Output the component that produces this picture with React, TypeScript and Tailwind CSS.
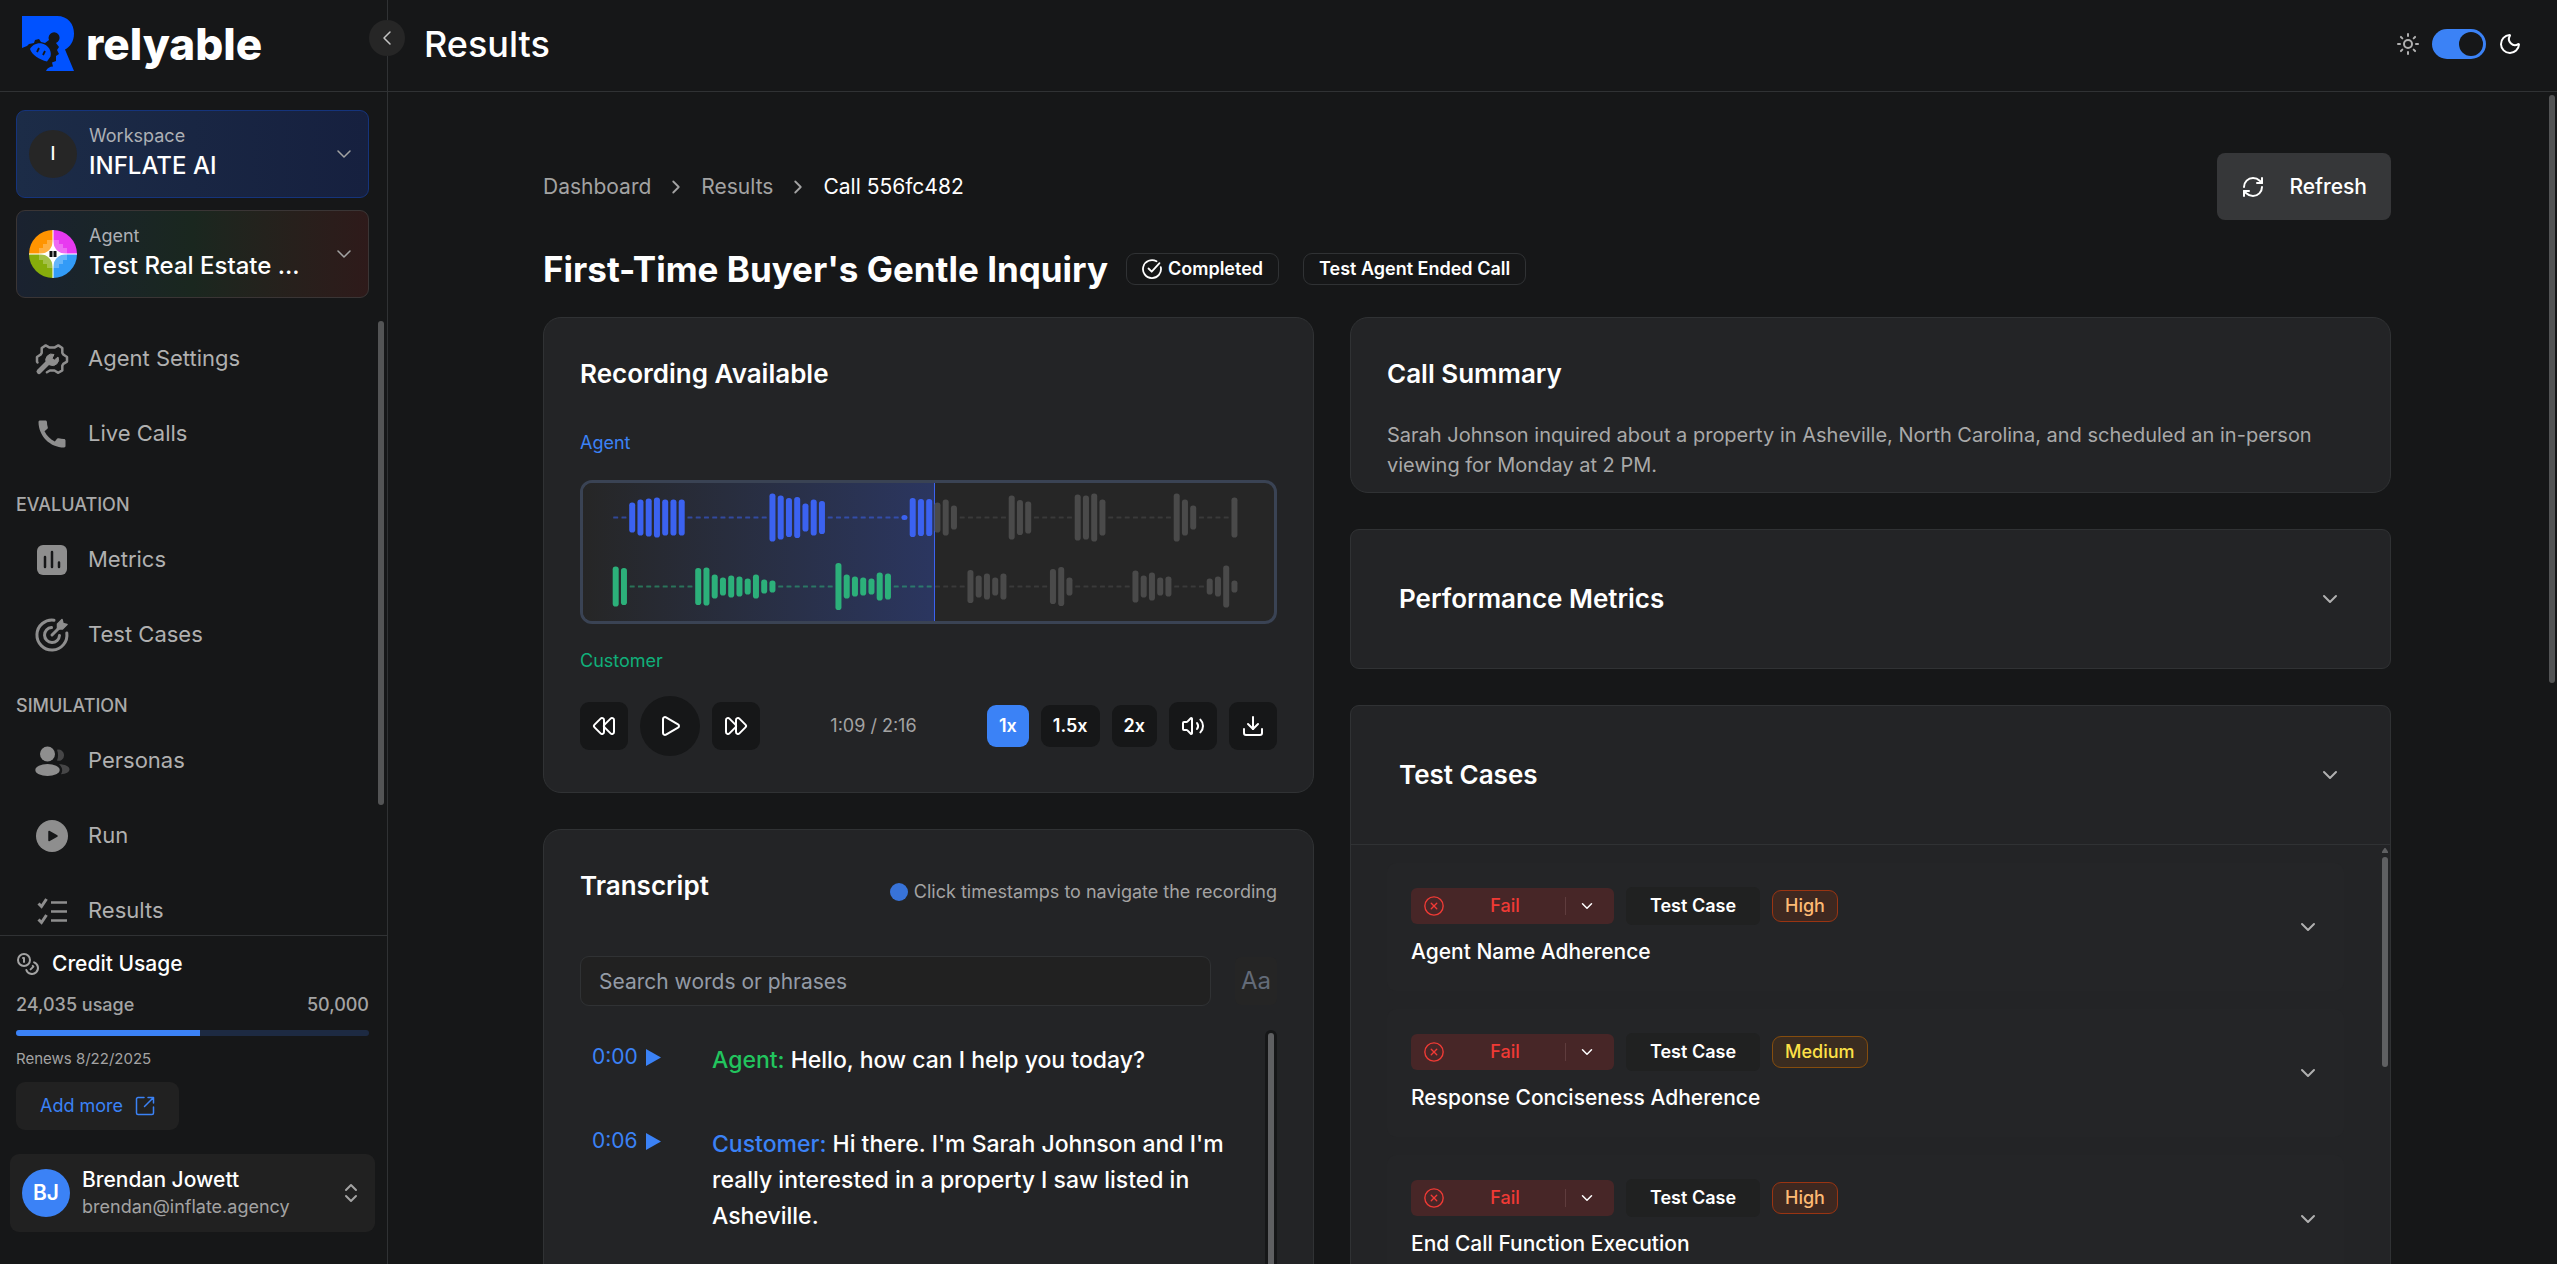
import React from 'react';
import {
  ChevronDown,
  ChevronLeft,
  ChevronRight,
  ChevronsUpDown,
  CircleX,
  Coins,
  Download,
  FastForward,
  Moon,
  Play,
  RefreshCw,
  Rewind,
  Sun,
  Volume2
} from 'lucide-react';
import { MdCall } from 'react-icons/md';

// Sidebar icons
const SettingsIcon = () => (
  <svg viewBox="0 0 36 36" className="size-9" fill="none" stroke="currentColor" strokeWidth="2.5" strokeLinecap="round" strokeLinejoin="round">
    <path d="M3.5 21.500 3 20.600v-4.500l3.700-2.600 1-1.700V7l4-2.600 3.900 2.200h4.800L24.300 4.400 28.300 7v4.800l1 1.700 3.700 2.600v4.500l-3.700 2.300-1 1.700v4.800l-4 2.400-3.900-2.300h-4.500l-3 1.800" />
    <path d="m5 30.500 9-9" strokeWidth="5" />
    <path d="M12.500 22a6 6 0 0 1 7.500-8.500l-2 4 2.500 1.500 3.500-3a6 6 0 0 1-8 8z" fill="currentColor" strokeWidth="1" />
  </svg>
);

const MetricsIcon = () => (
  <svg viewBox="0 0 36 36" className="size-9">
    <rect x="3" y="3" width="30" height="30" rx="6" fill="currentColor" />
    <path d="M11 15v10M18 10v15M25 20.500v4.500" stroke="#161718" strokeWidth="2.5" strokeLinecap="round" />
  </svg>
);

const TargetIcon = () => (
  <svg viewBox="0 0 36 36" className="size-9" fill="none" stroke="currentColor" strokeWidth="3" strokeLinecap="round">
    <path d="M20 3.200A15 15 0 1 0 32.800 16" />
    <path d="M17.500 10.500A7.500 7.500 0 1 0 25.500 18.500" />
    <path d="m18 18 7-7" />
    <path d="M23.500 12V7l4.500-4.500 1 4 4 1L28.500 12z" fill="currentColor" strokeWidth="1.5" strokeLinejoin="round" />
  </svg>
);

const PersonasIcon = () => (
  <svg viewBox="0 0 36 36" className="size-9" fill="currentColor">
    <circle cx="13.500" cy="11" r="7.500" />
    <ellipse cx="13.500" cy="27" rx="12.200" ry="6" />
    <path d="M23 6.800a5.600 5.600 0 1 1 0 10.800c1.400-3.600 1.400-7.200 0-10.800zM25 21.200c6 0 10.500 2.200 10.500 5s-3.500 4.800-8.500 5c2-3.200 1.600-7-2-10z" opacity="0.4" />
  </svg>
);

const RunIcon = () => (
  <svg viewBox="0 0 36 36" className="size-9">
    <circle cx="18" cy="18" r="16" fill="currentColor" />
    <path d="M15 13.500v9l8-4.500z" fill="#161718" stroke="#161718" strokeWidth="1.500" strokeLinejoin="round" />
  </svg>
);

const ResultsIcon = () => (
  <svg viewBox="0 0 36 36" className="size-9" fill="none" stroke="currentColor" strokeWidth="2.500">
    <path d="M17 9.500h16M17 18.500h16M17 27.500h16" />
    <path d="m4.500 10.500 3 3 5-7.500M4.500 26.500l3 3 5-7.500" strokeWidth="3" />
  </svg>
);

const LogoMark = () => (
  <svg viewBox="0 0 52 55" className="h-[55px] w-[52px]" fill="#0052ff">
    <path d="M0 0h35c11 0 17 8 17 17.500 0 8-4 13.500-9 16L52 55H24c1-3 4-4.500 7-4.500l-1-4 4-1.500v-5l3-2-2-4 2-3-3-4a5.500 5.500 0 1 0-7-3l-4 3-4-1-2-3-4 1-1 3-5 1-2 2-5 2z" />
    <path d="M8 33c2-4 7-6.500 12-5.500 6 1.500 10 7 8.500 13L25 45.500C17 43.500 10 39 8 33z" />
    <path d="m17 32-2 4M23 35l-2 4" stroke="#161718" strokeWidth="1.800" />
  </svg>
);

const AgentOrb = () => (
  <svg viewBox="0 0 48 48" className="size-12 rounded-full">
    <rect width="24" height="24" fill="#ff9500" />
    <rect x="24" width="24" height="24" fill="#e83af0" />
    <rect y="24" width="24" height="24" fill="#86ad0c" />
    <rect x="24" y="24" width="24" height="24" fill="#339cf7" />
    <path d="M10 18h4v-4h4v-4h12v4h4v4h4v12h-4v4h-4v4H18v-4h-4v-4h-4z" fill="#fff" opacity="0.25" />
    <path d="M24 0v48M0 24h48" stroke="#fff" strokeWidth="1.500" opacity="0.7" />
    <path d="M24 11c1 8 5 12 13 13-8 1-12 5-13 13-1-8-5-12-13-13 8-1 12-5 13-13z" fill="#fff" />
    <path d="M22 21v6M26 21v6" stroke="#111" strokeWidth="3" />
  </svg>
);

const ExternalIcon = () => (
  <svg viewBox="0 0 20 20" className="size-5" fill="none" stroke="currentColor" strokeWidth="1.500" strokeLinecap="round" strokeLinejoin="round">
    <path d="M9 1.500H3A1.500 1.500 0 0 0 1.500 3v14A1.500 1.500 0 0 0 3 18.500h14a1.500 1.500 0 0 0 1.500-1.500v-6" />
    <path d="M13 1.500h5.500V7M18 2l-8.500 8.500" />
  </svg>
);

const CompletedIcon = () => (
  <svg viewBox="0 0 20 20" className="size-5" fill="none" stroke="currentColor" strokeWidth="1.800" strokeLinecap="round" strokeLinejoin="round">
    <path d="M14.500 2.300A9 9 0 1 0 18.800 8.200" />
    <path d="m6.500 9.500 3.200 3.200 7.800-8.500" />
  </svg>
);

// Waveform levels, indexed by bar
const BAR_COUNT = 76;
const PLAYED = 39;
const agentLevels: Record<number, number> = {
  2: 30, 3: 36, 4: 38, 5: 40, 6: 36, 7: 36, 8: 36,
  19: 48, 20: 44, 21: 39, 22: 41, 23: 28, 24: 36, 25: 33,
  35: 5, 36: 39, 37: 37, 38: 37, 39: 30, 40: 36, 41: 24,
  48: 44, 49: 35, 50: 32, 56: 46, 57: 44, 58: 48, 59: 36,
  68: 48, 69: 36, 70: 24, 75: 40
};
const customerLevels: Record<number, number> = {
  0: 40, 1: 37, 10: 37, 11: 38, 12: 24, 13: 18, 14: 22, 15: 20, 16: 16, 17: 24, 18: 14, 19: 12,
  27: 47, 28: 24, 29: 20, 30: 18, 31: 16, 32: 28, 33: 26,
  43: 33, 44: 22, 45: 26, 46: 18, 47: 26, 53: 35, 54: 39, 55: 18,
  63: 32, 64: 22, 65: 28, 66: 18, 67: 20, 72: 16, 73: 20, 74: 42, 75: 12
};

const WaveRow = ({ levels, y, color }: { levels: Record<number, number>; y: number; color: string }) => (
  <g>
    {Array.from({ length: BAR_COUNT }, (_, i) => {
      const height = levels[i] || 2;
      const width = levels[i] ? 6 : 5;
      return (
        <rect
          key={i}
          x={32.7 + i * 8.25 - width / 2}
          y={y - height / 2}
          width={width}
          height={height}
          rx={levels[i] ? 2.8 : 0.5}
          fill={i < PLAYED ? color : '#4a4a4a'}
          opacity={levels[i] ? 1 : 0.55}
        />
      );
    })}
  </g>
);

const navSections = [
  {
    heading: '',
    items: [
      { label: 'Agent Settings', icon: <SettingsIcon /> },
      { label: 'Live Calls', icon: <MdCall className="size-9" /> }
    ]
  },
  {
    heading: 'EVALUATION',
    items: [
      { label: 'Metrics', icon: <MetricsIcon /> },
      { label: 'Test Cases', icon: <TargetIcon /> }
    ]
  },
  {
    heading: 'SIMULATION',
    items: [
      { label: 'Personas', icon: <PersonasIcon /> },
      { label: 'Run', icon: <RunIcon /> },
      { label: 'Results', icon: <ResultsIcon /> }
    ]
  }
];

const testCases = [
  { name: 'Agent Name Adherence', priority: 'High' },
  { name: 'Response Conciseness Adherence', priority: 'Medium' },
  { name: 'End Call Function Execution', priority: 'High' }
];

const transcript = [
  { time: '0:00', speaker: 'Agent', text: 'Hello, how can I help you today?' },
  {
    time: '0:06',
    speaker: 'Customer',
    text: "Hi there. I'm Sarah Johnson and I'm really interested in a property I saw listed in Asheville."
  }
];

const Sidebar: React.FC = () => (
  <aside className="relative flex w-[388px] shrink-0 flex-col border-r border-[#303234]">
    <div className="flex h-[92px] shrink-0 items-center gap-3 border-b border-[#303234] pb-1 pl-[22px]">
      <LogoMark />
      <span className="text-[44px] leading-none font-extrabold">relyable</span>
    </div>
    <button aria-label="Collapse sidebar" className="absolute top-5 -right-[18px] z-10 flex size-9 items-center justify-center rounded-full bg-[#262626] text-[#c4c4c4]">
      <ChevronLeft className="size-6" strokeWidth={1.5} />
    </button>

    {/* Workspace and agent switchers */}
    <div className="flex flex-col gap-3 pt-[18px] pr-[18px] pl-4">
      <button className="flex h-[88px] items-center gap-3 rounded-[9px] border border-[#15347c] bg-linear-to-r from-[#1c2c47] to-[#16203f] px-3 text-left">
        <span className="flex size-12 items-center justify-center rounded-full bg-[#262626] text-lg font-medium">I</span>
        <span className="flex-1">
          <span className="block text-lg leading-6 text-[#adb0b5]">Workspace</span>
          <span className="block text-2xl leading-9 font-medium">INFLATE AI</span>
        </span>
        <ChevronDown className="size-6 text-[#a3a3a3]" strokeWidth={1.5} />
      </button>
      <button className="flex h-[88px] items-center gap-3 rounded-[9px] border border-[#3a3535] bg-linear-to-r from-[#1a2230] via-[#1a271f] to-[#2e1a1a] px-3 text-left">
        <AgentOrb />
        <span className="flex-1">
          <span className="block text-lg leading-6 text-[#adb0b5]">Agent</span>
          <span className="block text-2xl leading-9 font-medium">Test Real Estate ...</span>
        </span>
        <ChevronDown className="size-6 text-[#a3a3a3]" strokeWidth={1.5} />
      </button>
    </div>

    {/* Navigation */}
    <nav className="relative mt-[23px] flex-1 overflow-hidden">
      {navSections.map((section) => (
        <div key={section.heading}>
          {section.heading && (
            <h2 className="pt-[19px] pb-0.5 pl-4 text-lg leading-[30px] font-medium text-[#a9a9a9]">{section.heading}</h2>
          )}
          {section.items.map((item) => (
            <a key={item.label} href="#" className="flex h-[75px] items-center gap-[18px] pl-[34px] text-[22px] text-[#b0b0b0]">
              <span className="text-[#8e8e8e]">{item.icon}</span>
              {item.label}
            </a>
          ))}
        </div>
      ))}
      <div className="absolute top-0 right-[3px] h-[484px] w-1.5 rounded-full bg-[#535455]" />
    </nav>

    {/* Credit usage */}
    <section className="border-t border-[#303234] pt-3 pr-[18px] pl-4">
      <div className="flex items-center gap-3 text-[21px] leading-8 font-medium">
        <Coins className="size-6 text-[#a3a3a3]" />
        Credit Usage
      </div>
      <div className="mt-3 flex justify-between text-lg leading-[26px] font-medium text-[#a3a3a3]">
        <span>24,035 usage</span>
        <span>50,000</span>
      </div>
      <div className="mt-3 h-1.5 overflow-hidden rounded-full bg-[#1d2a42]">
        <div className="h-full w-[52%] bg-[#3b82f6]" />
      </div>
      <p className="mt-3 text-[15px] leading-[22px] text-[#a3a3a3]">Renews 8/22/2025</p>
      <button className="mt-3 flex h-12 items-center gap-3 rounded-[9px] bg-[#212121] px-6 text-lg text-[#3b82f6]">
        Add more
        <ExternalIcon />
      </button>
    </section>
    <button className="mt-6 mr-3 mb-8 ml-2.5 flex h-[78px] items-center gap-3 rounded-[9px] bg-[#212121] px-3 text-left">
      <span className="flex size-12 items-center justify-center rounded-full bg-[#3b82f6] text-[21px] font-semibold">BJ</span>
      <span className="flex-1">
        <span className="block text-[21px] leading-7 font-medium">Brendan Jowett</span>
        <span className="block text-lg leading-[26px] text-[#a3a3a3]">brendan@inflate.agency</span>
      </span>
      <ChevronsUpDown className="size-6 text-[#a3a3a3]" />
    </button>
  </aside>
);

const controlClass = 'flex size-12 items-center justify-center rounded-[9px] bg-[#161718]';
const speedClass = 'h-[42px] rounded-[9px] px-3 text-lg font-semibold';

const Recording: React.FC = () => (
  <section className="rounded-[18px] border border-[#303234] bg-[#232426] p-9">
    <h2 className="text-[26px] leading-10 font-semibold">Recording Available</h2>
    <p className="mt-9 text-lg leading-[26px] text-[#3b82f6]">Agent</p>
    <div className="relative mt-6 h-36 overflow-hidden rounded-xl border-3 border-[#3a4354] bg-[#262626]">
      <div className="absolute inset-y-0 left-0 w-[51%] border-r border-[#3b62f0] bg-linear-to-r from-[#262626] to-[#2b3660]" />
      <svg viewBox="0 0 691 138" className="relative h-full w-full" preserveAspectRatio="none">
        <WaveRow levels={agentLevels} y={34.5} color="#3b62f0" />
        <WaveRow levels={customerLevels} y={103.5} color="#2cb07a" />
      </svg>
    </div>
    <p className="mt-6 text-lg leading-[26px] text-[#10b07a]">Customer</p>
    <div className="mt-[22px] flex items-center justify-between">
      <div className="flex items-center gap-3">
        <button aria-label="Rewind" className={controlClass}><Rewind className="size-6" /></button>
        <button aria-label="Play" className="flex size-[60px] items-center justify-center rounded-full bg-[#161718]">
          <Play className="size-6" />
        </button>
        <button aria-label="Fast forward" className={controlClass}><FastForward className="size-6" /></button>
      </div>
      <span className="text-lg text-[#a3a3a3]">1:09 / 2:16</span>
      <div className="flex items-center gap-3">
        <button className={`${speedClass} bg-[#3b82f6]`}>1x</button>
        <button className={`${speedClass} bg-[#161718]`}>1.5x</button>
        <button className={`${speedClass} bg-[#161718]`}>2x</button>
        <button aria-label="Volume" className={controlClass}><Volume2 className="size-6" /></button>
        <button aria-label="Download" className={controlClass}><Download className="size-6" /></button>
      </div>
    </div>
  </section>
);

const Transcript: React.FC = () => (
  <section className="rounded-[18px] border border-[#303234] bg-[#232426] p-9">
    <div className="flex items-end justify-between">
      <h2 className="text-[26px] leading-10 font-semibold">Transcript</h2>
      <p className="flex items-center gap-1.5 text-lg leading-7 text-[#a3a3a3]">
        <span className="size-[18px] rounded-full bg-[#3873d8]" />
        Click timestamps to navigate the recording
      </p>
    </div>
    <div className="mt-[50px] flex items-center gap-6">
      <input
        aria-label="Search transcript"
        placeholder="Search words or phrases"
        className="h-[50px] min-w-0 flex-1 rounded-[9px] border border-[#303234] bg-[#212121] px-[18px] text-[21px] placeholder:text-[#949ba6]"
      />
      <button aria-label="Match case" className="h-12 rounded-md bg-[#252525] px-1.5 text-2xl text-[#636b79]">Aa</button>
    </div>
    <div className="relative mt-6 flex h-[600px] flex-col gap-6 overflow-hidden pr-3">
      {transcript.map((line) => (
        <div key={line.time} className="flex p-3">
          <button className="flex h-[30px] w-[120px] shrink-0 items-center gap-2 text-[21px] text-[#3b82f6]">
            {line.time}
            <svg viewBox="0 0 15 17" className="h-[17px] w-[15px]" fill="currentColor"><path d="M0 0v17l15-8.500z" /></svg>
          </button>
          <p className="text-[23px] leading-9 font-medium">
            <span className={line.speaker === 'Agent' ? 'text-[#22c55e]' : 'text-[#3b82f6]'}>{line.speaker}:</span>{' '}
            {line.text}
          </p>
        </div>
      ))}
      <div className="absolute inset-y-0 right-0 w-3 rounded-full bg-[#161718] p-[3px]">
        <div className="h-full w-1.5 rounded-full bg-[#5f6062]" />
      </div>
    </div>
  </section>
);

const TestCaseCard: React.FC<{ name: string; priority: string }> = ({ name, priority }) => (
  <div className="flex items-center justify-between rounded-[9px] bg-[#242527] p-6">
    <div>
      <div className="flex items-center gap-3">
        <button className="flex h-9 w-[203px] items-center rounded-md bg-[#472627] pr-[18px] pl-3 text-lg font-medium text-[#f03a35]">
          <CircleX className="size-[22px]" strokeWidth={1.5} />
          <span className="flex-1">Fail</span>
          <span className="mr-3 h-[18px] w-px bg-[#5f3c3d]" />
          <ChevronDown className="size-[18px] text-white" />
        </button>
        <span className="flex h-[38px] items-center rounded-md bg-[#202121] px-6 text-lg font-semibold">Test Case</span>
        <span
          className={`flex h-8 items-center rounded-[9px] border px-3 text-lg font-medium ${
            priority === 'High' ? 'border-[#9a3412] bg-[#3e2820] text-[#fdba74]' : 'border-[#854d0e] bg-[#3a2c20] text-[#fde047]'
          }`}
        >
          {priority}
        </span>
      </div>
      <h3 className="mt-3 text-[21px] leading-[30px] font-medium">{name}</h3>
    </div>
    <ChevronDown className="size-6 text-[#b0b0b0]" />
  </div>
);

const App: React.FC = () => {
  return (
    <div className="flex h-screen overflow-hidden bg-[#161718] font-[Inter,sans-serif] text-white">
      <Sidebar />
      <div className="flex min-w-0 flex-1 flex-col">
        <header className="flex h-[92px] shrink-0 items-center justify-between border-b border-[#303234] pr-[35px] pb-[3px] pl-9">
          <h1 className="text-4xl font-medium">Results</h1>
          <div className="flex items-center gap-3">
            <Sun className="size-6 text-[#b0b0b0]" />
            <button role="switch" aria-checked="true" aria-label="Dark mode" className="flex h-[30px] w-[54px] justify-end rounded-full bg-[#3b82f6] p-[3px]">
              <span className="size-6 rounded-full bg-[#161718]" />
            </button>
            <Moon className="size-6" />
          </div>
        </header>

        <main className="relative flex-1 overflow-hidden pr-[11px]">
          <div className="mx-auto max-w-[1920px] px-9 pt-[61px]">
            <div className="flex items-center justify-between">
              <nav className="flex items-center gap-3.5 text-[21px] text-[#a3a3a3]">
                <a href="#">Dashboard</a>
                <ChevronRight className="size-[22px]" />
                <a href="#">Results</a>
                <ChevronRight className="size-[22px]" />
                <span className="text-white">Call 556fc482</span>
              </nav>
              <button className="flex h-[67px] items-center gap-6 rounded-lg bg-[#363739] px-6 text-[21px] font-medium">
                <RefreshCw className="size-6" />
                Refresh
              </button>
            </div>

            <div className="flex items-center gap-6 pt-[25px] pb-6">
              <div className="flex items-center gap-[18px]">
                <h1 className="text-[35px] leading-[48px] font-bold">First-Time Buyer's Gentle Inquiry</h1>
                <span className="flex h-8 items-center gap-1.5 rounded-[9px] border border-[#303234] px-[15px] text-lg font-semibold">
                  <CompletedIcon />
                  Completed
                </span>
              </div>
              <span className="flex h-8 items-center rounded-[9px] border border-[#303234] px-[15px] text-lg font-semibold">
                Test Agent Ended Call
              </span>
            </div>

            <div className="grid grid-cols-[771fr_1041fr] items-start gap-9">
              <div className="flex flex-col gap-9">
                <Recording />
                <Transcript />
              </div>
              <div className="flex flex-col gap-9">
                <section className="rounded-[18px] border border-[#303234] bg-[#232426] px-9 pt-9 pb-3">
                  <h2 className="text-[26px] leading-10 font-semibold">Call Summary</h2>
                  <p className="mt-[26px] text-xl leading-[30px] text-[#a9a9a9]">
                    Sarah Johnson inquired about a property in Asheville, North Carolina, and scheduled an in-person viewing for Monday at 2 PM.
                  </p>
                </section>

                <section className="rounded-[9px] border border-[#303234] bg-[#232426]">
                  <button className="flex w-full items-center justify-between p-12">
                    <span className="text-[26px] leading-[42px] font-semibold">Performance Metrics</span>
                    <ChevronDown className="size-6 text-[#b0b0b0]" />
                  </button>
                </section>

                <section className="rounded-[9px] border border-[#303234] bg-[#232426]">
                  <button className="flex w-full items-center justify-between p-12">
                    <span className="text-[26px] leading-[42px] font-semibold">Test Cases</span>
                    <ChevronDown className="size-6 text-[#b0b0b0]" />
                  </button>
                  <div className="relative flex flex-col gap-[18px] border-t border-[#303234] py-[18px] pr-[46px] pl-9">
                    {testCases.map((testCase) => (
                      <TestCaseCard key={testCase.name} {...testCase} />
                    ))}
                    <div className="absolute top-[3px] right-0.5 flex flex-col items-center gap-1">
                      <svg viewBox="0 0 6 5" className="h-[5px] w-1.5" fill="#5f6062"><path d="M2.500 0h1L6 3.500V5H0V3.500z" /></svg>
                      <div className="h-[210px] w-1.5 rounded-full bg-[#5f6062]" />
                    </div>
                  </div>
                </section>
              </div>
            </div>
          </div>
          <div className="absolute top-[3px] right-0.5 h-[588px] w-1.5 rounded-full bg-[#535455]" />
        </main>
      </div>
    </div>
  );
};

export default App;
